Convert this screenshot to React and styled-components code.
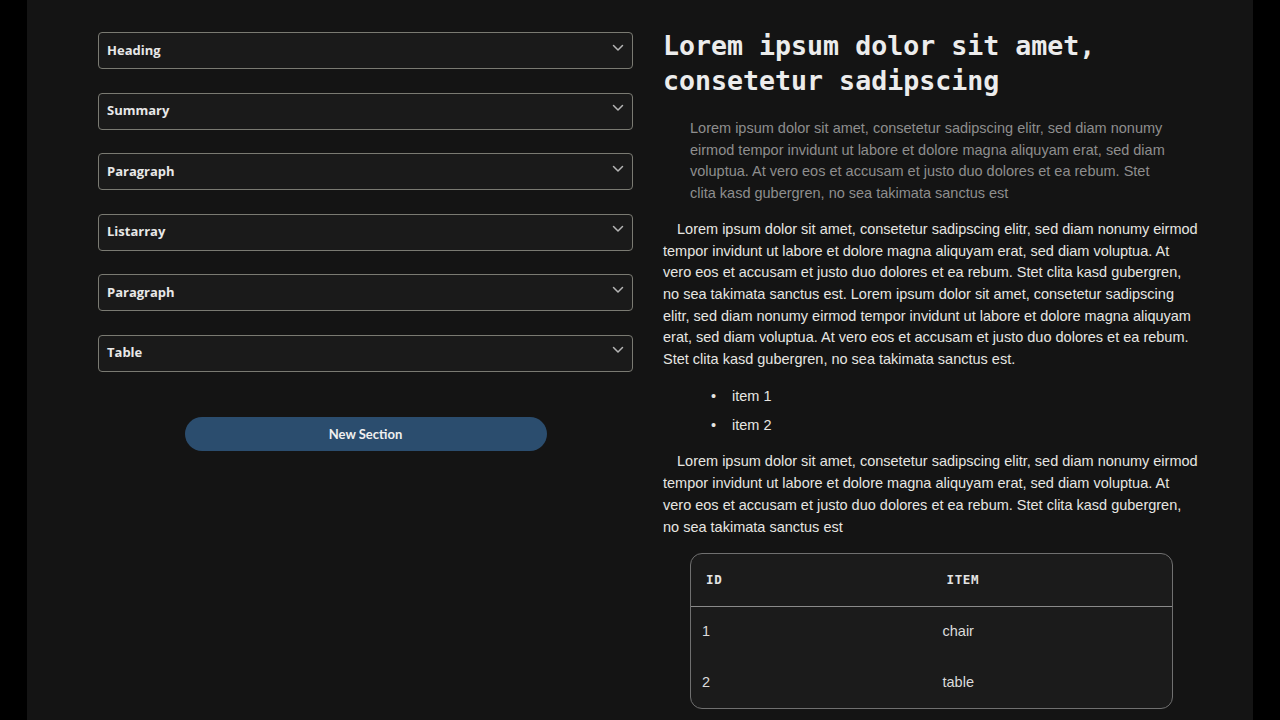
import React from "react";
import styled, { createGlobalStyle } from "styled-components";

const GlobalStyle = createGlobalStyle`
  html, body {
    margin: 0;
    padding: 0;
    background: #000;
  }
  * { box-sizing: border-box; }
`;

const Page = styled.div`
  width: 1226px;
  min-height: 100vh;
  margin: 0 auto;
  background: #141414;
  display: grid;
  grid-template-columns: 535px 537px;
  column-gap: 30px;
  padding: 28px 53px 0 71px;
  align-items: start;
`;

const Editor = styled.div`
  display: flex;
  flex-direction: column;
  padding-top: 4px;
`;

const SectionList = styled.div`
  display: flex;
  flex-direction: column;
  gap: 23.6px;
`;

const SectionItem = styled.div`
  height: 37px;
  border: 1px solid #7a7a72;
  border-radius: 4px;
  background: #1a1a1a;
  display: flex;
  align-items: center;
  justify-content: space-between;
  padding: 0 8px 2px 8px;
  color: #e8e8e8;
  font-family: "Open Sans", "Liberation Sans", sans-serif;
  font-weight: 700;
  font-size: 13px;
  cursor: pointer;
`;

const Chevron = styled.svg`
  width: 12px;
  height: 8px;
  margin-bottom: 4px;
`;

const NewButton = styled.button`
  align-self: center;
  margin-top: 45px;
  width: 362px;
  height: 34px;
  border: none;
  border-radius: 17px;
  background: #2b4d6e;
  color: #f0f0f0;
  font-family: "Lato", "Open Sans", sans-serif;
  font-weight: 700;
  font-size: 13px;
`;

const Preview = styled.div`
  color: #e6e6e2;
  font-family: "Liberation Sans", Arial, sans-serif;
  font-size: 14.5px;
  line-height: 21.7px;
`;

const Title = styled.h1`
  margin: 0;
  font-family: "DejaVu Sans Mono", "Liberation Mono", monospace;
  font-weight: 700;
  font-size: 26.6px;
  line-height: 35px;
  color: #ececec;
`;

const Quote = styled.blockquote`
  margin: 20px 27px 14px;
  color: #8e8e8e;
`;

const Para = styled.p`
  margin: 0 0 15px;
  text-indent: 14px;
`;

const List = styled.ul`
  margin: 0 0 15px;
  padding-left: 48px;
  list-style: none;
`;

const ListItem = styled.li`
  margin-bottom: 7.3px;
  &::before {
    content: "•";
    display: inline-block;
    width: 21px;
  }
`;

const TableWrap = styled.div`
  margin: 15px 27px 0;
  border: 1px solid #707070;
  border-radius: 12px;
  background: #1b1b1b;
  overflow: hidden;
`;

const Table = styled.table`
  width: 100%;
  border-collapse: collapse;
  table-layout: fixed;
`;

const Th = styled.th`
  height: 52px;
  text-align: left;
  padding: 0 15px;
  font-family: "DejaVu Sans Mono", "Liberation Mono", monospace;
  font-weight: 700;
  font-size: 12.5px;
  letter-spacing: 0.6px;
  text-transform: uppercase;
  color: #e4e4e4;
  border-bottom: 1px solid #8a8a8a;
`;

const Td = styled.td`
  height: 51px;
  padding: 0 12px 0 11px;
  color: #dcdcdc;
`;

const sections = ["Heading", "Summary", "Paragraph", "Listarray", "Paragraph", "Table"];

const loremShort =
  "Lorem ipsum dolor sit amet, consetetur sadipscing elitr, sed diam nonumy eirmod tempor invidunt ut labore et dolore magna aliquyam erat, sed diam voluptua. At vero eos et accusam et justo duo dolores et ea rebum. Stet clita kasd gubergren, no sea takimata sanctus est";

const rows = [
  { id: 1, item: "chair" },
  { id: 2, item: "table" },
];

const App = () => (
  <>
    <GlobalStyle />
    <Page>
      <Editor>
        <SectionList>
          {sections.map((s, i) => (
            <SectionItem key={i}>
              {s}
              <Chevron viewBox="0 0 12 8" fill="none">
                <path d="M1.5 1.5 L6 6 L10.5 1.5" stroke="#b4b4b4" strokeWidth="1.5" strokeLinecap="round" strokeLinejoin="round" />
              </Chevron>
            </SectionItem>
          ))}
        </SectionList>
        <NewButton>New Section</NewButton>
      </Editor>

      <Preview>
        <Title>Lorem ipsum dolor sit amet, consetetur sadipscing</Title>
        <Quote>{loremShort}</Quote>
        <Para>
          Lorem ipsum dolor sit amet, consetetur sadipscing elitr, sed diam nonumy eirmod tempor invidunt ut labore et
          dolore magna aliquyam erat, sed diam voluptua. At vero eos et accusam et justo duo dolores et ea rebum. Stet
          clita kasd gubergren, no sea takimata sanctus est. Lorem ipsum dolor sit amet, consetetur sadipscing elitr, sed
          diam nonumy eirmod tempor invidunt ut labore et dolore magna aliquyam erat, sed diam voluptua. At vero eos et
          accusam et justo duo dolores et ea rebum. Stet clita kasd gubergren, no sea takimata sanctus est.
        </Para>
        <List>
          <ListItem>item 1</ListItem>
          <ListItem>item 2</ListItem>
        </List>
        <Para>{loremShort}</Para>
        <TableWrap>
          <Table>
            <thead>
              <tr>
                <Th>ID</Th>
                <Th>Item</Th>
              </tr>
            </thead>
            <tbody>
              {rows.map((r) => (
                <tr key={r.id}>
                  <Td>{r.id}</Td>
                  <Td>{r.item}</Td>
                </tr>
              ))}
            </tbody>
          </Table>
        </TableWrap>
      </Preview>
    </Page>
  </>
);

export default App;
